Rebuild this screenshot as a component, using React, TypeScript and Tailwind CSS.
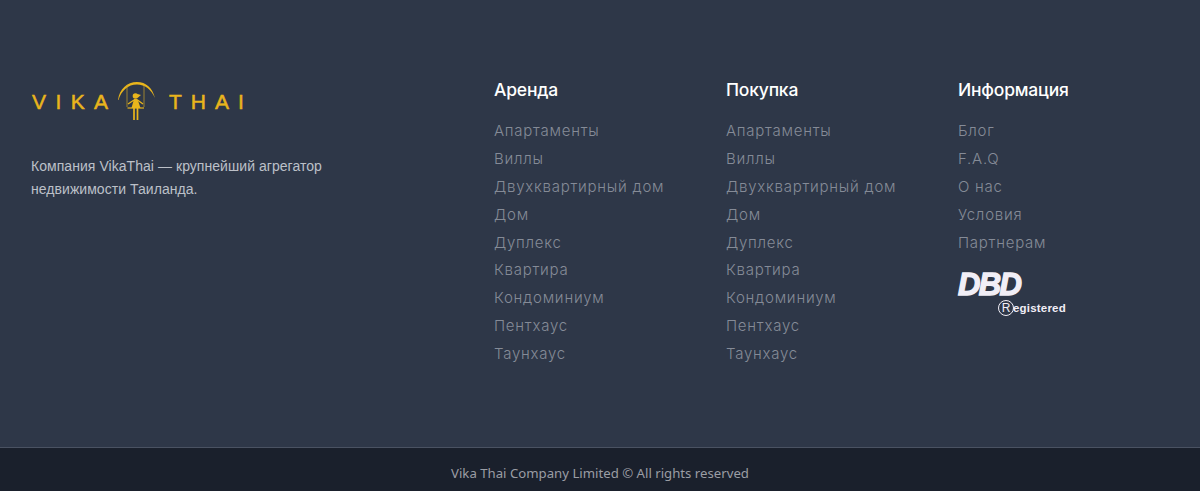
const propertyLinks = [
  'Апартаменты',
  'Виллы',
  'Двухквартирный дом',
  'Дом',
  'Дуплекс',
  'Квартира',
  'Кондоминиум',
  'Пентхаус',
  'Таунхаус',
]

const infoLinks = ['Блог', 'F.A.Q', 'О нас', 'Условия', 'Партнерам']

function LinkList({ links }: { links: string[] }) {
  return (
    <ul className="mt-[14px] flex flex-col">
      {links.map((label) => (
        <li key={label} className="h-[27.9px] font-['Inter',sans-serif] text-[15px] leading-[27.9px] font-light tracking-[0.75px] text-[#858b97]">
          {label}
        </li>
      ))}
    </ul>
  )
}

function SwingGirl() {
  return (
    <svg width="46" height="42" viewBox="0 0 46 42" className="shrink-0" aria-hidden>
      <path d="M4 20C5.5 9 13 2 23 2C32 2 38.5 8 41 18C37 9.5 31 4.5 23 4.5C14 4.5 7.5 10.5 4.5 20Z" fill="#e9b51c" />
      <path d="M13 5V27M30 5V27" stroke="#c9a32a" strokeWidth="0.7" />
      <circle cx="21.5" cy="16" r="2.8" fill="#e9b51c" />
      <path d="M23.5 14L27 15L24 17.5Z" fill="#e9b51c" />
      <path d="M20 19H23.5L26.5 28H17.5Z" fill="#e9b51c" />
      <path d="M20 20L14 24M23.5 20L29 24" stroke="#e9b51c" strokeWidth="1.3" />
      <path d="M13.5 28H30" stroke="#e9b51c" strokeWidth="1.2" />
      <path d="M20 28V40M23.5 28V40" stroke="#e9b51c" strokeWidth="1.7" />
    </svg>
  )
}

function Logo() {
  return (
    <div className="mt-[3px] ml-[1px] flex h-[42px] items-center font-['Liberation_Sans',sans-serif] text-[21px] leading-none text-[#e9b51c] [-webkit-text-stroke:0.5px_#e9b51c]">
      <span className="mt-[0px] w-[82px] tracking-[9.4px]">VIKA</span>
      <SwingGirl />
      <span className="ml-[9px] tracking-[9px]">THAI</span>
    </div>
  )
}

function DbdMark() {
  return (
    <div className="mt-[15px] flex flex-col font-['Liberation_Sans',sans-serif] text-[#f1eef6]">
      <span className="text-[31px] leading-[28px] font-bold tracking-[-1.6px] italic [-webkit-text-stroke:1.4px_#f1eef6]">
        DBD
      </span>
      <span className="mt-[1px] ml-[40px] flex items-center text-[11.5px] leading-[16px] font-bold">
        <span className="flex h-[16px] w-[16px] items-center justify-center rounded-full border-[1.5px] border-[#f1eef6] text-[12px] font-normal">
          R
        </span>
        <span className="-ml-[1px] tracking-[0.2px]">egistered</span>
      </span>
    </div>
  )
}

function Column({ title, links, children }: { title: string; links: string[]; children?: React.ReactNode }) {
  return (
    <div className="w-[232px]">
      <h3 className="font-['Inter',sans-serif] text-[17.5px] leading-[26px] font-medium tracking-[-0.2px] text-white">{title}</h3>
      <LinkList links={links} />
      {children}
    </div>
  )
}

export default function App() {
  return (
    <footer className="flex h-[491px] w-full flex-col overflow-hidden bg-[#2e3748]">
      <div className="flex h-[448px] justify-between border-b border-[#4a5262] pt-[77px] pr-[10px] pl-[31px]">
        <div className="w-[330px]">
          <Logo />
          <p className="mt-[33px] font-['Liberation_Sans',sans-serif] text-[14px] leading-[23px] tracking-[0.05px] text-[#bcc0c8]">
            Компания VikaThai — крупнейший агрегатор
            <br />
            недвижимости Таиланда.
          </p>
        </div>
        <div className="flex">
          <Column title="Аренда" links={propertyLinks} />
          <Column title="Покупка" links={propertyLinks} />
          <Column title="Информация" links={infoLinks}>
            <DbdMark />
          </Column>
        </div>
      </div>
      <div className="flex flex-1 items-center justify-center bg-[#1a202c] pt-[8px]">
        <p className="font-['Noto_Sans',sans-serif] text-[13.2px] leading-none text-[#9a9da4]">
          Vika Thai Company Limited © All rights reserved
        </p>
      </div>
    </footer>
  )
}
